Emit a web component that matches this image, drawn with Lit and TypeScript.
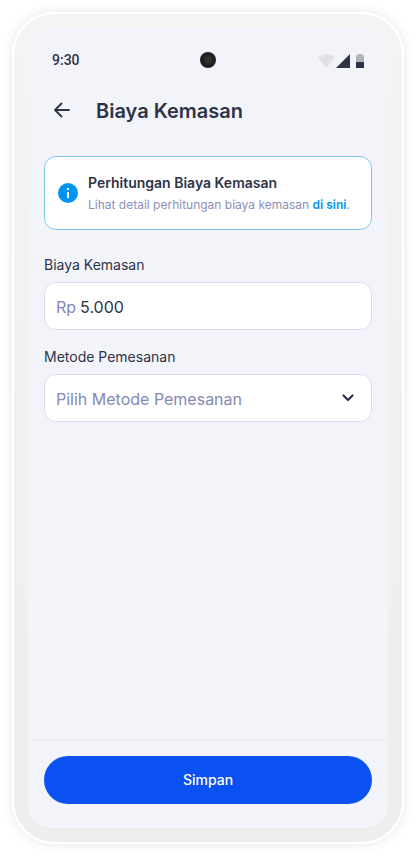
import { LitElement, html, css } from "lit";
import { customElement, state } from "lit/decorators.js";

@customElement("status-bar")
class StatusBar extends LitElement {
  static styles = css`
    :host {
      display: grid;
      grid-template-columns: 1fr auto 1fr;
      align-items: center;
      height: 64px;
      padding: 0 24px;
      flex: none;
    }
    .time {
      font: 500 14px/20px Roboto, sans-serif;
      color: #2f3347;
    }
    .camera {
      width: 16px;
      height: 16px;
      border-radius: 50%;
      background: radial-gradient(circle, #343434 0 2px, #262626 4px, #1e1e1e 6px);
    }
    .icons {
      justify-self: end;
      display: block;
    }
  `;

  render() {
    return html`
      <span class="time">9:30</span>
      <span class="camera"></span>
      <svg class="icons" width="46" height="16" viewBox="0 0 46 16" aria-hidden="true">
        <path d="M0 5.600C2.300 3.500 5.200 2.200 8.500 2.200S14.700 3.500 17 5.600L8.500 16Z" fill="#e1e2e7" />
        <path d="M17.500 16.500L32 2V16.500Z" fill="#2f3347" />
        <path d="M40 3V2h4v1h1.300q.7 0 .7.7V10h-8V3.700q0-.7.7-.7Z" fill="#b3b4ba" />
        <path d="M38 10h8v6.300q0 .7-.7.7h-6.600q-.7 0-.7-.7Z" fill="#2f3347" />
      </svg>
    `;
  }
}

@customElement("app-root")
class AppRoot extends LitElement {
  @state() private cost = "5.000";

  static styles = css`
    :host {
      display: flex;
      box-sizing: border-box;
      min-height: 100vh;
      padding: 12px;
      background: #fff;
      color: #2f3347;
      font-family: Inter, sans-serif;
    }
    * {
      box-sizing: border-box;
    }
    .phone {
      flex: 1;
      display: flex;
      min-width: 0;
      padding: 14px;
      border: 2px solid #fff;
      border-radius: 42px;
      background: linear-gradient(#f4f4f4, #ededed) padding-box;
      box-shadow: 0 0 12px rgba(0, 0, 0, 0.1);
    }
    .screen {
      flex: 1;
      display: flex;
      flex-direction: column;
      min-width: 0;
      border-radius: 24px;
      background: #f3f4fa;
      overflow: hidden;
    }
    .header {
      display: flex;
      align-items: center;
      gap: 22px;
      height: 38px;
      padding: 0 22px;
    }
    .back {
      display: flex;
      padding: 0;
      border: 0;
      background: none;
      color: inherit;
      cursor: pointer;
    }
    .title {
      margin: 0;
      font-size: 20px;
      line-height: 28px;
      font-weight: 600;
    }
    .content {
      flex: 1;
      padding: 26px 16px 16px;
    }
    .notice {
      display: flex;
      align-items: center;
      gap: 8px;
      padding: 14px 11px;
      border: 1px solid #7cc8f6;
      border-radius: 12px;
      background: #fff;
    }
    .notice-icon {
      flex: none;
    }
    .notice-title {
      margin: 0;
      font-size: 14px;
      line-height: 24px;
      font-weight: 600;
    }
    .notice-text {
      margin: 0;
      font-size: 12px;
      line-height: 20px;
      color: #8b90ba;
      white-space: nowrap;
    }
    .notice-text a {
      color: #0094f0;
      font-weight: 600;
      text-decoration: none;
    }
    .form {
      display: grid;
      gap: 18px;
      margin-top: 26px;
    }
    .field {
      display: grid;
      gap: 8px;
    }
    .label {
      font-size: 14px;
      line-height: 18px;
    }
    .box {
      display: flex;
      align-items: center;
      gap: 4px;
      height: 48px;
      padding: 2px 11px 0;
      border: 1px solid #d9dcf1;
      border-radius: 12px;
      background: #fff;
      font-size: 16px;
      line-height: 24px;
    }
    .prefix {
      color: #8489b5;
    }
    .control {
      flex: 1;
      min-width: 0;
      height: 24px;
      margin: 0;
      padding: 0;
      border: 0;
      outline: 0;
      background: none;
      appearance: none;
      font: inherit;
      color: inherit;
    }
    .select {
      color: #8489b5;
    }
    .select:valid {
      color: #2f3347;
    }
    .chevron {
      flex: none;
      pointer-events: none;
    }
    .footer {
      padding: 16px 16px 24px;
      border-top: 1px solid #e9eaf1;
    }
    .save {
      display: block;
      width: 100%;
      height: 48px;
      border: 0;
      border-radius: 24px;
      background: #0b50f0;
      color: #fff;
      font: 500 14px/20px Inter, sans-serif;
      cursor: pointer;
    }
  `;

  private onCost(e: Event) {
    this.cost = (e.target as HTMLInputElement).value;
  }

  render() {
    return html`
      <div class="phone">
        <div class="screen">
          <status-bar></status-bar>
          <header class="header">
            <button class="back" aria-label="Kembali">
              <svg width="24" height="24" viewBox="0 0 24 24" fill="none" stroke="currentColor" stroke-width="1.800" stroke-linecap="round" stroke-linejoin="round">
                <path d="M19 11H5M11.500 4.500L5 11L11.500 17.500" />
              </svg>
            </button>
            <h1 class="title">Biaya Kemasan</h1>
          </header>
          <main class="content">
            <section class="notice">
              <svg class="notice-icon" width="24" height="24" viewBox="0 0 24 24" aria-hidden="true">
                <circle cx="12" cy="12" r="10" fill="#0094f0" />
                <path d="M11 7h2v2h-2zM11 11h2v6h-2z" fill="#fff" />
              </svg>
              <div>
                <h2 class="notice-title">Perhitungan Biaya Kemasan</h2>
                <p class="notice-text">Lihat detail perhitungan biaya kemasan <a href="#detail">di sini</a>.</p>
              </div>
            </section>
            <form class="form" id="form" @submit=${(e: Event) => e.preventDefault()}>
              <div class="field">
                <label class="label" for="cost">Biaya Kemasan</label>
                <div class="box">
                  <span class="prefix">Rp</span>
                  <input class="control" id="cost" inputmode="numeric" .value=${this.cost} @input=${this.onCost} />
                </div>
              </div>
              <div class="field">
                <label class="label" for="method">Metode Pemesanan</label>
                <div class="box">
                  <select class="control select" id="method" required>
                    <option value="">Pilih Metode Pemesanan</option>
                  </select>
                  <svg class="chevron" width="24" height="24" viewBox="0 0 24 24" fill="none" stroke="#2f3347" stroke-width="2.200" stroke-linecap="round" stroke-linejoin="round" aria-hidden="true">
                    <path d="M7.500 8.500L12 13L16.500 8.500" />
                  </svg>
                </div>
              </div>
            </form>
          </main>
          <footer class="footer">
            <button class="save" type="submit" form="form">Simpan</button>
          </footer>
        </div>
      </div>
    `;
  }
}
